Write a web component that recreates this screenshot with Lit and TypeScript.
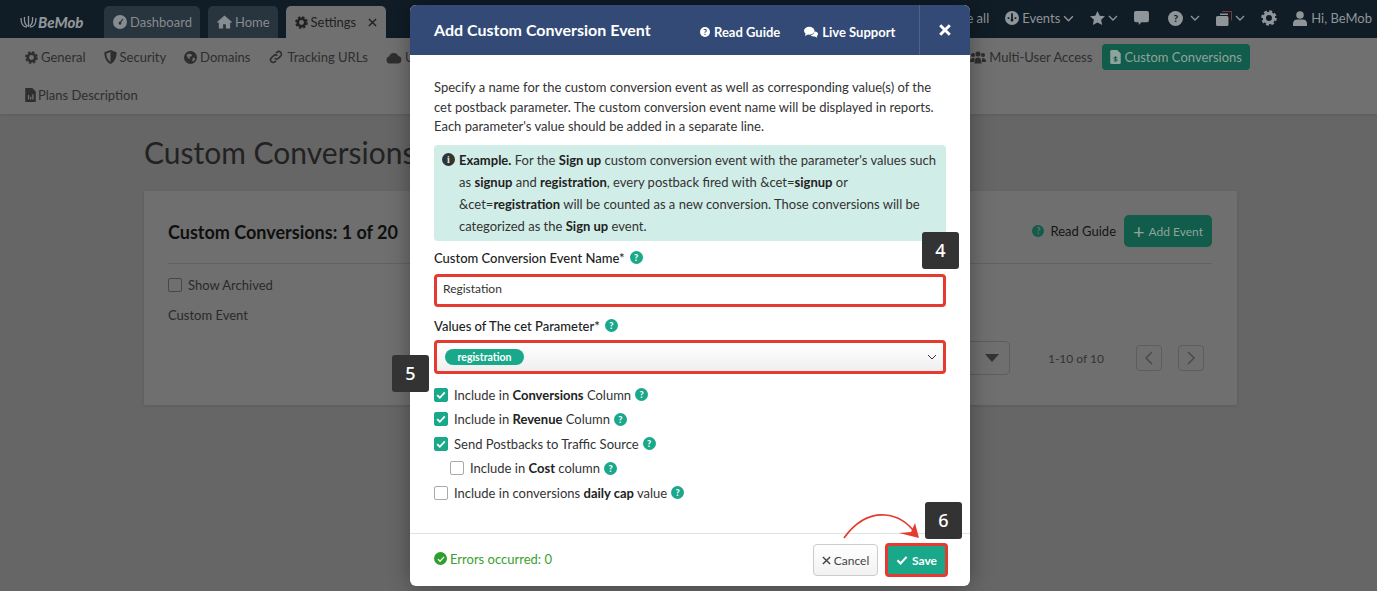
import { LitElement, html, css, svg } from 'lit';
import { customElement } from 'lit/decorators.js';

const gear = (size = 14) => html`<svg class="ic" width=${size} height=${size} viewBox="0 0 16 16">
  <circle cx="8" cy="8" r="4.6" fill="none" stroke="currentColor" stroke-width="3.2"></circle>
  <circle cx="8" cy="8" r="6.6" fill="none" stroke="currentColor" stroke-width="2.4" stroke-dasharray="2.9 2.28"></circle>
</svg>`;
const chevron = (size = 10, w = 1.3) => html`<svg class="ic" width=${size} height=${size} viewBox="0 0 10 10">
  <path d="M1 3l4 4 4-4" fill="none" stroke="currentColor" stroke-width=${w}></path>
</svg>`;
const times = (size = 10, w = 2) => html`<svg class="ic" width=${size} height=${size} viewBox="0 0 10 10">
  <path d="M1 1l8 8M9 1l-8 8" fill="none" stroke="currentColor" stroke-width=${w}></path>
</svg>`;
const check = (size = 10, w = 1.8) => html`<svg class="ic" width=${size} height=${size} viewBox="0 0 10 10">
  <path d="M1.2 5.2l2.6 2.6 5-5.4" fill="none" stroke="currentColor" stroke-width=${w}></path>
</svg>`;
const icons: Record<string, unknown> = {
  gauge: html`<svg class="ic" width="14" height="14" viewBox="0 0 16 16"><path fill-rule="evenodd" fill="currentColor" d="M8 0a8 8 0 100 16A8 8 0 008 0zM8 11a1.6 1.6 0 110-3.2L11 4l.9.6L9.3 8.6A1.6 1.6 0 018 11z"></path></svg>`,
  events: html`<svg class="ic" width="14" height="14" viewBox="0 0 16 16"><path fill-rule="evenodd" fill="currentColor" d="M8 0a8 8 0 100 16A8 8 0 008 0zM7 2.500h2v6.700a1.600 1.600 0 11-2 0zM3 7h2v2H3zM11 7h2v2h-2z"></path></svg>`,
  home: html`<svg class="ic" width="15" height="14" viewBox="0 0 16 14"><path fill="currentColor" d="M8 0L0 7l1 1 1-.8V14h4.5V9.5h3V14H14V7.2l1 .8 1-1z"></path></svg>`,
  shield: html`<svg class="ic" width="13" height="14" viewBox="0 0 14 16"><path fill-rule="evenodd" fill="currentColor" d="M7 0L0 2.5C0 9 2.5 13.8 7 16c4.5-2.2 7-7 7-13.500zM7 2.400v11.200C4.200 12 2.500 8.800 2.200 4z"></path></svg>`,
  globe: html`<svg class="ic" width="13" height="13" viewBox="0 0 16 16"><path fill-rule="evenodd" fill="currentColor" d="M8 0a8 8 0 100 16A8 8 0 008 0zM3 5l3-2 3 1 1 2-3 1v3L5 9zm8 3l3 1-2 4-2-1z"></path></svg>`,
  link: html`<svg class="ic" width="16" height="14" viewBox="0 0 16 16"><path fill="none" stroke="currentColor" stroke-width="1.800" d="M6.500 9.500a3 3 0 004.300 0l2.500-2.500a3 3 0 00-4.300-4.300L8 3.700M9.500 6.500a3 3 0 00-4.300 0L2.700 9a3 3 0 004.300 4.300L8 12.300"></path></svg>`,
  cloud: html`<svg class="ic" width="16" height="13" viewBox="0 0 16 13"><path fill="currentColor" d="M4 12.500a3.500 3.500 0 01-.8-6.900A4.800 4.800 0 0112.300 5 3.800 3.800 0 0112 12.500z"></path></svg>`,
  users: html`<svg class="ic" width="16" height="13" viewBox="0 0 16 13"><g fill="currentColor"><circle cx="3" cy="4" r="2"></circle><circle cx="13" cy="4" r="2"></circle><circle cx="8" cy="3" r="2.500"></circle><path d="M0 11c0-3 1.500-4 3.500-4S4 9 4 11zM12 11c0-2 0-4 .5-4 2 0 3.500 1 3.500 4zM4.500 12.500c0-4 1-6 3.500-6s3.500 2 3.500 6z"></path></g></svg>`,
  file: html`<svg class="ic" width="11" height="14" viewBox="0 0 12 16"><path fill-rule="evenodd" fill="currentColor" d="M0 0h8l4 4v12H0zM3 8v5h1.500V8zm2.500 2v3H7v-3zM8 7v6h1.500V7z"></path></svg>`,
  fileDollar: html`<svg class="ic" width="11" height="14" viewBox="0 0 12 16"><path fill="currentColor" d="M0 1.500A1.500 1.500 0 011.500 0H8l4 4v10.500a1.500 1.500 0 01-1.500 1.500h-9A1.500 1.500 0 010 14.500z"></path><path d="M6 7v6M8 8.500H5a1 1 0 000 2h2a1 1 0 010 2H4" fill="none" stroke="#115c4a" stroke-width="1"></path></svg>`,
  star: html`<svg class="ic" width="15" height="14" viewBox="0 0 16 15"><path fill="currentColor" d="M8 0l2.400 5 5.600.7-4.100 3.800 1.100 5.500L8 12.300 3 15l1.100-5.500L0 5.700 5.600 5z"></path></svg>`,
  comment: html`<svg class="ic" width="15" height="14" viewBox="0 0 16 15"><path fill="currentColor" d="M2 0h12a2 2 0 012 2v8a2 2 0 01-2 2H8l-3 3v-3H2a2 2 0 01-2-2V2a2 2 0 012-2z"></path></svg>`,
  copy: html`<svg class="ic" width="16" height="15" viewBox="0 0 16 15"><path fill="none" stroke="#7a3a3a" stroke-width="1" d="M6 .5h9.500v9"></path><path fill="currentColor" d="M4 2.500h8v1.500H4z"></path><path fill="currentColor" d="M1.500 5H11a1.500 1.500 0 011.500 1.500v7A1.500 1.500 0 0111 15H1.500A1.500 1.500 0 010 13.500v-7A1.500 1.500 0 011.500 5z"></path></svg>`,
  user: html`<svg class="ic" width="14" height="15" viewBox="0 0 14 15"><circle cx="7" cy="4" r="3.800" fill="currentColor"></circle><path fill="currentColor" d="M0 15v-2.500C0 10 2 8.500 4 8.500h6c2 0 4 1.500 4 4V15z"></path></svg>`,
  comments: html`<svg class="ic" width="14" height="12" viewBox="0 0 16 13"><ellipse cx="6" cy="5" rx="6" ry="4.500" fill="currentColor"></ellipse><path fill="currentColor" d="M2 7.500L1 11l4-2zM12 5.500c2.500.5 4 1.500 4 3.200 0 1-.6 1.800-1.400 2.300l.6 2-2.800-1.300c-2 0-4-.5-5-1.900 2.500 0 4.500-2 4.600-4.300z"></path></svg>`,
};
const badge = () => html`<span class="q">?</span>`;
const sub = (icon: string, label: string, active = false) =>
  html`<a class="item ${active ? 'on' : ''}">${icon === 'gear' ? gear(13) : icons[icon]}${label}</a>`;

@customElement('app-root')
export class AppRoot extends LitElement {
  static styles = css`
    :host {
      display: block;
      height: 100vh;
      overflow: hidden;
      position: relative;
      background: #666;
      font-family: Lato, 'Open Sans', sans-serif;
      font-size: 13px;
      color: #222;
    }
    .ic { flex: none; display: block; }

    .top {
      height: 38px;
      background: #101c26;
      display: flex;
      align-items: flex-end;
      padding-left: 20px;
      color: #8f9598;
    }
    .logo {
      width: 84px;
      height: 32px;
      display: flex;
      align-items: center;
      gap: 1px;
      font-weight: 900;
      font-style: italic;
      font-size: 15px;
      color: #8f9598;
    }
    .tab {
      height: 32px;
      padding: 0 8px 0 9px;
      margin-right: 8px;
      background: #28343e;
      border-radius: 5px 5px 0 0;
      display: flex;
      align-items: center;
      gap: 3px;
      font-size: 13px;
      color: #868c90;
    }
    .tab.on {
      background: #707070;
      color: #222;
      padding-right: 9px;
    }
    .tab.on .x { margin-left: 9px; }
    .right {
      margin-left: auto;
      height: 36px;
      align-self: flex-start;
      display: flex;
      align-items: center;
      gap: 16px;
      padding-right: 5px;
      font-size: 13px;
    }
    .right > span {
      display: flex;
      align-items: center;
      gap: 3px;
    }
    .right > .cm { margin-right: 3px; }
    .right > .hp { gap: 7px; }
    .right > .us { gap: 4px; }

    .subnav {
      height: 76px;
      box-sizing: border-box;
      background: #707070;
      padding: 6px 127px 0 25px;
      box-shadow: 0 1px 2px rgba(0, 0, 0, 0.1);
      color: #2e2e2e;
      font-size: 13px;
    }
    .row { display: flex; align-items: center; gap: 18px; height: 26px; }
    .row.second { margin-top: 12px; }
    .row.second .item { gap: 2px; }
    .item {
      display: flex;
      align-items: center;
      gap: 3px;
      white-space: nowrap;
    }
    .item.on {
      height: 26px;
      padding: 0 8px;
      border-radius: 4px;
      background: #115c4a;
      color: #8fa39d;
    }
    .push { margin-left: auto; }
    .row .on { margin-left: -8px; }

    .page { padding: 19px 140px 0 144px; }
    h1 {
      margin: 0 0 20px;
      font-weight: 400;
      font-size: 30px;
      line-height: 38px;
      color: #222;
      white-space: nowrap;
    }
    .card {
      height: 214px;
      box-sizing: border-box;
      padding: 24px 25px 0 24px;
      background: #6f6f6f;
      box-shadow: 0 1px 3px rgba(0, 0, 0, 0.12);
    }
    .card-head {
      display: flex;
      align-items: center;
      height: 32px;
      padding-bottom: 16px;
      border-bottom: 1px solid #626262;
    }
    .card-head h2 {
      margin: 0;
      padding-top: 2px;
      font-size: 18px;
      font-weight: 700;
      color: #0f0f0f;
    }
    .guide {
      margin-left: auto;
      display: flex;
      align-items: center;
      gap: 6px;
      font-size: 13px;
      color: #151515;
    }
    .q {
      width: 13px;
      height: 13px;
      border-radius: 50%;
      background: #1aa88a;
      color: #fff;
      font-size: 9px;
      font-weight: 900;
      line-height: 13px;
      text-align: center;
      flex: none;
    }
    .guide .q { width: 12px; height: 12px; line-height: 12px; background: #115c4a; color: #6f6f6f; }
    .add {
      margin-left: 8px;
      width: 88px;
      height: 32px;
      box-sizing: border-box;
      border-radius: 5px;
      background: #115c4a;
      color: #8fa39d;
      display: flex;
      align-items: center;
      justify-content: center;
      gap: 4px;
      font-size: 12px;
    }
    .plus { font-size: 20px; line-height: 18px; font-weight: 400; }
    .archived {
      display: flex;
      align-items: center;
      gap: 6px;
      margin-top: 13px;
      height: 16px;
      color: #2a2a2a;
    }
    .dim-box {
      width: 12px;
      height: 12px;
      border: 1px solid #474747;
      border-radius: 2px;
    }
    .event { margin-top: 13px; line-height: 18px; color: #2a2a2a; }
    .pager {
      margin-top: 17px;
      display: flex;
      align-items: center;
      justify-content: flex-end;
      color: #333;
    }
    .select {
      width: 60px;
      height: 34px;
      box-sizing: border-box;
      border: 1px solid #5d5d5d;
      border-radius: 5px;
      display: flex;
      align-items: center;
      justify-content: flex-end;
      padding-right: 10px;
    }
    .tri {
      width: 0;
      height: 0;
      border-left: 7px solid transparent;
      border-right: 7px solid transparent;
      border-top: 8px solid #333;
    }
    .count { margin: 0 32px 0 38px; font-size: 12px; }
    .pg {
      width: 26px;
      height: 26px;
      box-sizing: border-box;
      border: 1px solid #5d5d5d;
      border-radius: 4px;
      display: flex;
      align-items: center;
      justify-content: center;
      margin-right: 16px;
      color: #4a4a4a;
    }
    .pg:last-child { margin-right: 8px; }

    .modal {
      position: absolute;
      left: 410px;
      top: 5px;
      width: 560px;
      height: 581px;
      display: flex;
      flex-direction: column;
      background: #fff;
      border-radius: 6px;
      box-shadow: 0 0 22px rgba(0, 0, 0, 0.35);
    }
    .m-head {
      height: 50px;
      flex: none;
      display: flex;
      align-items: center;
      padding-left: 24px;
      background: #324a75;
      color: #fff;
      border-radius: 6px 6px 0 0;
    }
    .m-title { font-size: 16px; font-weight: 700; width: 266px; white-space: nowrap; padding-bottom: 1px; }
    .m-link {
      display: flex;
      align-items: center;
      gap: 4px;
      font-size: 13px;
      font-weight: 700;
      white-space: nowrap;
      padding-top: 3px;
    }
    .m-link .q { background: #fff; color: #324a75; width: 10px; height: 10px; line-height: 10px; font-size: 8px; }
    .m-link.one { margin-right: 24px; }
    .m-close {
      margin-left: auto;
      width: 51px;
      height: 50px;
      box-sizing: border-box;
      border-left: 1px solid #4d628a;
      display: flex;
      align-items: center;
      justify-content: center;
    }
    .m-body { flex: 1; padding: 23px 24px 0; }
    .intro { margin: 0; line-height: 19.500px; color: #333; font-size: 13px; }
    .note {
      margin-top: 8px;
      height: 96px;
      box-sizing: border-box;
      padding: 4px 6px 0 25px;
      background: #d1ede7;
      border-radius: 4px;
      position: relative;
      line-height: 22px;
      color: #333;
    }
    b { color: #222; font-weight: 700; }
    .note-i {
      position: absolute;
      left: 8px;
      top: 8px;
      width: 13px;
      height: 13px;
      border-radius: 50%;
      background: #333;
      color: #d1ede7;
      font-size: 10px;
      font-weight: 900;
      line-height: 13px;
      text-align: center;
      font-family: 'Liberation Serif', serif;
    }
    .lbl {
      display: flex;
      align-items: center;
      gap: 5px;
      height: 20px;
      margin-top: 7px;
      font-size: 13px;
      color: #222;
      font-weight: 500;
    }
    .lbl.two { margin-top: 9px; }
    .input {
      margin-top: 6px;
      height: 33px;
      width: 512px;
      box-sizing: border-box;
      border: 3px solid #e53a2f;
      border-radius: 4px;
      display: flex;
      align-items: center;
      padding: 0 0 3px 6px;
      font-size: 12px;
      color: #333;
    }
    .multi {
      margin-top: 4px;
      height: 34px;
      background: linear-gradient(#fff, #efefef);
      justify-content: space-between;
      padding: 0 6px 0 8px;
    }
    .pill {
      height: 16px;
      width: 79px;
      border-radius: 8px;
      background: #1aa88a;
      color: #fff;
      font-size: 10.500px;
      font-weight: 700;
      line-height: 16px;
      text-align: center;
    }
    .checks { margin-top: 11.400px; display: flex; flex-direction: column; gap: 4.500px; }
    .ck {
      height: 20px;
      display: flex;
      align-items: center;
      gap: 6px;
      color: #333;
    }
    .ck.in { padding-left: 16px; }
    .ck .q { margin-left: -2px; }
    .box {
      width: 14px;
      height: 14px;
      box-sizing: border-box;
      border-radius: 2px;
      border: 1.500px solid #aaa;
      display: flex;
      align-items: center;
      justify-content: center;
      flex: none;
    }
    .box.yes { background: #1aa88a; border-color: #1aa88a; color: #fff; }
    .m-foot {
      height: 53px;
      flex: none;
      box-sizing: border-box;
      border-top: 1px solid #e2e2e2;
      display: flex;
      align-items: center;
      padding: 0 22px 0 24px;
    }
    .errors {
      display: flex;
      align-items: center;
      gap: 3px;
      font-size: 13px;
      color: #3aa02f;
      padding-bottom: 3px;
    }
    .ok {
      width: 13px;
      height: 13px;
      border-radius: 50%;
      background: #2f9e2f;
      color: #fff;
      display: flex;
      align-items: center;
      justify-content: center;
    }
    .cancel {
      margin-left: auto;
      width: 65px;
      height: 32px;
      box-sizing: border-box;
      border: 1px solid #ccc;
      border-radius: 4px;
      background: linear-gradient(#fff, #f2f2f2);
      display: flex;
      align-items: center;
      justify-content: center;
      gap: 3px;
      font-size: 12px;
      color: #444;
    }
    .save {
      margin-left: 7px;
      width: 63px;
      height: 34px;
      box-sizing: border-box;
      border: 3px solid #e53a2f;
      border-radius: 4px;
      background: #1aa88a;
      color: #fff;
      display: flex;
      align-items: center;
      justify-content: center;
      gap: 4px;
      font-size: 12px;
      font-weight: 700;
    }

    .step {
      position: absolute;
      width: 37px;
      height: 37px;
      background: #333;
      border-radius: 3px;
      color: #fff;
      font-family: 'Noto Sans', sans-serif;
      font-size: 18px;
      font-weight: 500;
      line-height: 37px;
      text-align: center;
    }
    .arrow { position: absolute; left: 835px; top: 505px; }
  `;

  render() {
    return html`
      <div class="top">
        <div class="logo">
          <svg width="17" height="14" viewBox="0 0 17 14"><path d="M1 3c0 6 2 9 6 9M16 3c0 6-2 9-6 9M8.500 1v11M4.500 2c-.5 5 1 8 3 9M12.500 2c.5 5-1 8-3 9" fill="none" stroke="currentColor" stroke-width="1.300"></path></svg>
          BeMob
        </div>
        <div class="tab">${icons.gauge}Dashboard</div>
        <div class="tab">${icons.home}Home</div>
        <div class="tab on">${gear(13)}Settings<span class="x">${times(9, 1.6)}</span></div>
        <div class="right">
          <span>See all</span>
          <span>${icons.events}Events${chevron(11)}</span>
          <span>${icons.star}${chevron()}</span>
          <span class="cm">${icons.comment}</span>
          <span class="hp"><span class="q" style="width:15px;height:15px;line-height:15px;background:#8f9598;color:#101c26;font-size:10px">?</span>${chevron()}</span>
          <span>${icons.copy}${chevron()}</span>
          <span>${gear(16)}</span>
          <span class="us">${icons.user}Hi, BeMob</span>
        </div>
      </div>
      <nav class="subnav">
        <div class="row">
          ${sub('gear', 'General')}
          ${sub('shield', 'Security')}
          ${sub('globe', 'Domains')}
          ${sub('link', 'Tracking URLs')}
          ${sub('cloud', 'Uploads')}
          <span class="push"></span>
          ${sub('users', 'Multi-User Access')}
          ${sub('fileDollar', 'Custom Conversions', true)}
        </div>
        <div class="row second">${sub('file', 'Plans Description')}</div>
      </nav>
      <main class="page">
        <h1>Custom Conversions</h1>
        <section class="card">
          <div class="card-head">
            <h2>Custom Conversions: 1 of 20</h2>
            <span class="guide">${badge()}Read Guide</span>
            <span class="add"><span class="plus">+</span>Add Event</span>
          </div>
          <div class="archived"><span class="dim-box"></span>Show Archived</div>
          <div class="event">Custom Event</div>
          <div class="pager">
            <span class="select"><span class="tri"></span></span>
            <span class="count">1-10 of 10</span>
            <span class="pg"><svg width="10" height="16" viewBox="0 0 10 16"><path d="M8 2L2 8l6 6" fill="none" stroke="currentColor" stroke-width="1.500"></path></svg></span>
            <span class="pg"><svg width="10" height="16" viewBox="0 0 10 16"><path d="M2 2l6 6-6 6" fill="none" stroke="currentColor" stroke-width="1.500"></path></svg></span>
          </div>
        </section>
      </main>

      <div class="modal">
        <header class="m-head">
          <span class="m-title">Add Custom Conversion Event</span>
          <span class="m-link one"><span class="q">?</span>Read Guide</span>
          <span class="m-link">${icons.comments}Live Support</span>
          <span class="m-close">${times(12, 2.4)}</span>
        </header>
        <div class="m-body">
          <p class="intro">Specify a name for the custom conversion event as well as corresponding value(s) of the cet postback parameter. The custom conversion event name will be displayed in reports. Each parameter's value should be added in a separate line.</p>
          <div class="note">
            <span class="note-i">i</span>
            <b>Example.</b> For the <b>Sign up</b> custom conversion event with the parameter's values such as <b>signup</b> and <b>registration</b>, every postback fired with &amp;cet=<b>signup</b> or &amp;cet=<b>registration</b> will be counted as a new conversion. Those conversions will be categorized as the <b>Sign up</b> event.
          </div>
          <div class="lbl"><span>Custom Conversion Event Name*</span>${badge()}</div>
          <div class="input">Registation</div>
          <div class="lbl two"><span>Values of The cet Parameter*</span>${badge()}</div>
          <div class="input multi"><span class="pill">registration</span>${chevron(10, 1)}</div>
          <div class="checks">
            <div class="ck"><span class="box yes">${check()}</span><span>Include in <b>Conversions</b> Column</span>${badge()}</div>
            <div class="ck"><span class="box yes">${check()}</span><span>Include in <b>Revenue</b> Column</span>${badge()}</div>
            <div class="ck"><span class="box yes">${check()}</span><span>Send Postbacks to Traffic Source</span>${badge()}</div>
            <div class="ck in"><span class="box"></span><span>Include in <b>Cost</b> column</span>${badge()}</div>
            <div class="ck"><span class="box"></span><span>Include in conversions <b>daily cap</b> value</span>${badge()}</div>
          </div>
        </div>
        <footer class="m-foot">
          <span class="errors"><span class="ok">${check(8, 1.6)}</span>Errors occurred: 0</span>
          <span class="cancel">${times(9, 1.6)}Cancel</span>
          <span class="save">${check(12, 1.8)}Save</span>
        </footer>
      </div>

      <span class="step" style="left:922px;top:232px">4</span>
      <span class="step" style="left:392px;top:355px">5</span>
      <span class="step" style="left:925px;top:502px">6</span>
      <svg class="arrow" width="90" height="40" viewBox="0 0 90 40">
        ${svg`<path d="M9 33C22 15 36 9 50 10c14 1 24 9 31 19" fill="none" stroke="#e53a2f" stroke-width="1.700"></path>
        <path d="M84 33L80 18 76 27 64 28z" fill="#e53a2f"></path>`}
      </svg>
    `;
  }
}
